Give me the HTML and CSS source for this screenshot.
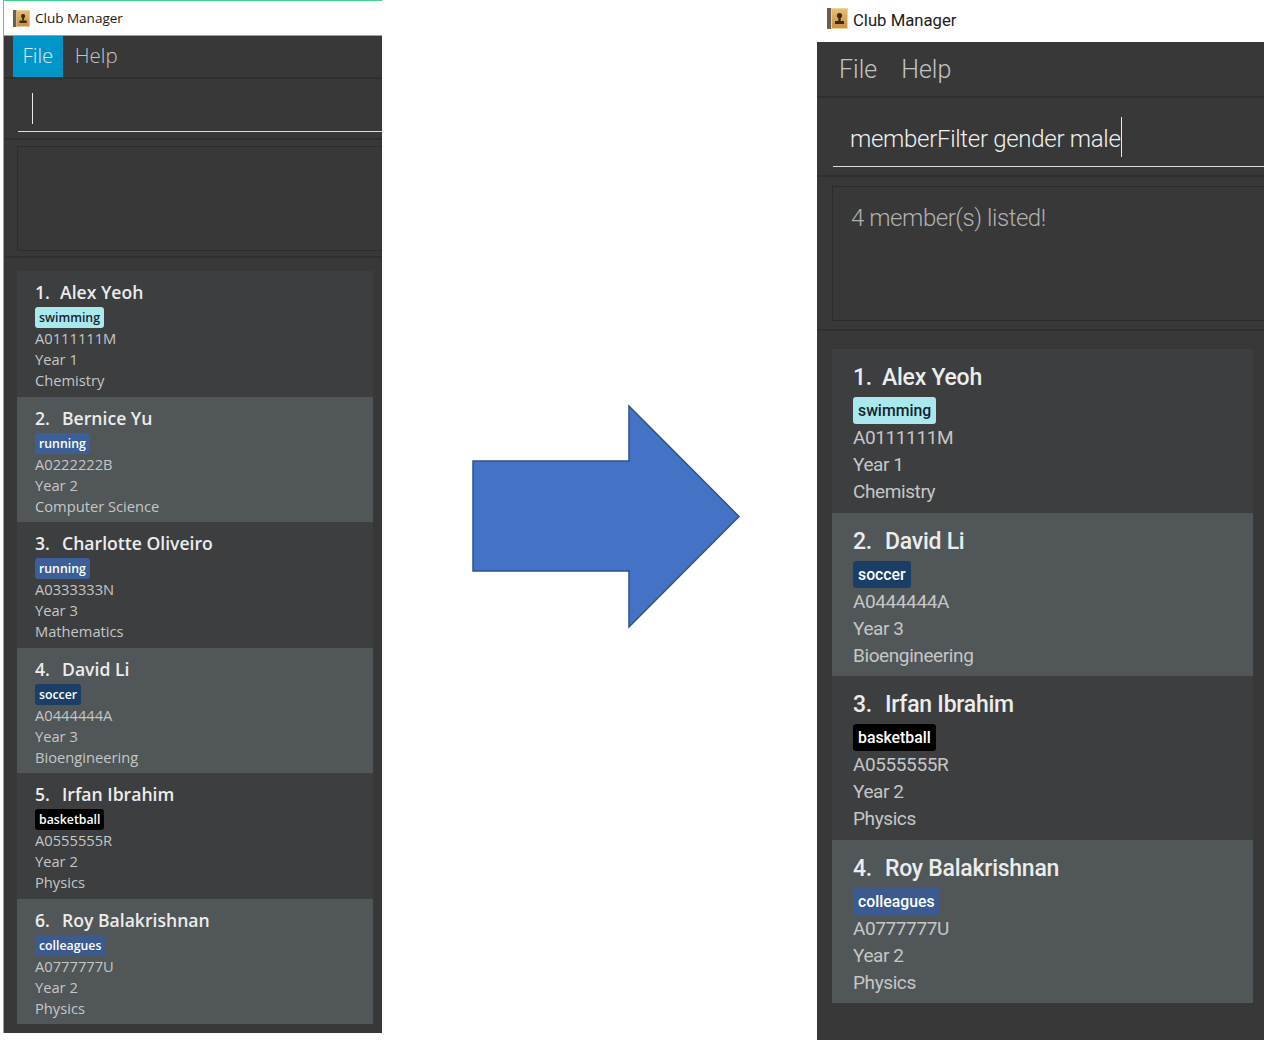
FILE: index.html
```html
<!DOCTYPE html>
<html lang="en">
<head>
    <meta charset="UTF-8">
    <meta name="viewport" content="width=device-width, initial-scale=1.0">
    <title>Club Manager</title>
    <link rel="stylesheet" href="styles.css">
</head>
<body>

<div class="window window-before">
    <div class="titlebar">
        <svg class="app-icon" viewBox="0 0 21 21"><defs><linearGradient id="cover" x1="0" y1="0" x2="0" y2="1"><stop offset="0" stop-color="#e9bd72"/><stop offset="1" stop-color="#c98f3f"/></linearGradient></defs><rect width="21" height="21" fill="#f0d39c"/><rect width="4" height="21" fill="#6b5f50"/><rect x="5" y="1" width="15" height="19" fill="url(#cover)"/><circle cx="12.5" cy="7.5" r="2.6" fill="#3b2a17"/><rect x="11.3" y="9" width="2.4" height="4" fill="#3b2a17"/><rect x="8" y="13" width="9" height="3" fill="#3b2a17"/></svg>
        <span>Club Manager</span>
    </div>
    <div class="menubar">
        <span class="menu-item active">File</span>
        <span class="menu-item">Help</span>
    </div>
    <div class="command-bar">
        <div class="command-input"><span class="caret"></span></div>
    </div>
    <div class="result-bar">
        <div class="result-box"></div>
    </div>
    <div class="member-list">
        <div class="card">
            <div class="name"><span class="index">1.</span>Alex Yeoh</div>
            <div class="tags"><span class="tag tag-swimming">swimming</span></div>
            <div class="line">A0111111M</div>
            <div class="line">Year 1</div>
            <div class="line">Chemistry</div>
        </div>
        <div class="card even">
            <div class="name"><span class="index">2.</span>Bernice Yu</div>
            <div class="tags"><span class="tag tag-running">running</span></div>
            <div class="line">A0222222B</div>
            <div class="line">Year 2</div>
            <div class="line">Computer Science</div>
        </div>
        <div class="card">
            <div class="name"><span class="index">3.</span>Charlotte Oliveiro</div>
            <div class="tags"><span class="tag tag-running">running</span></div>
            <div class="line">A0333333N</div>
            <div class="line">Year 3</div>
            <div class="line">Mathematics</div>
        </div>
        <div class="card even">
            <div class="name"><span class="index">4.</span>David Li</div>
            <div class="tags"><span class="tag tag-soccer">soccer</span></div>
            <div class="line">A0444444A</div>
            <div class="line">Year 3</div>
            <div class="line">Bioengineering</div>
        </div>
        <div class="card">
            <div class="name"><span class="index">5.</span>Irfan Ibrahim</div>
            <div class="tags"><span class="tag tag-basketball">basketball</span></div>
            <div class="line">A0555555R</div>
            <div class="line">Year 2</div>
            <div class="line">Physics</div>
        </div>
        <div class="card even">
            <div class="name"><span class="index">6.</span>Roy Balakrishnan</div>
            <div class="tags"><span class="tag tag-colleagues">colleagues</span></div>
            <div class="line">A0777777U</div>
            <div class="line">Year 2</div>
            <div class="line">Physics</div>
        </div>
    </div>
</div>

<div class="arrow-area">
    <svg class="arrow" viewBox="0 0 270 226"><polygon points="1,57 157,57 157,2 267,112.5 157,223 157,167 1,167" fill="#4472c4" stroke="#2f528f" stroke-width="1.5"/></svg>
</div>

<div class="window window-after">
    <div class="titlebar">
        <svg class="app-icon" viewBox="0 0 21 21"><rect width="21" height="21" fill="#f0d39c"/><rect width="4" height="21" fill="#6b5f50"/><rect x="5" y="1" width="15" height="19" fill="url(#cover)"/><circle cx="12.5" cy="7.5" r="2.6" fill="#3b2a17"/><rect x="11.3" y="9" width="2.4" height="4" fill="#3b2a17"/><rect x="8" y="13" width="9" height="3" fill="#3b2a17"/></svg>
        <span class="title-text">Club Manager</span>
    </div>
    <div class="menubar">
        <span class="menu-item">File</span>
        <span class="menu-item">Help</span>
    </div>
    <div class="command-bar">
        <div class="command-input"><span class="command-text">memberFilter gender male</span><span class="caret"></span></div>
    </div>
    <div class="result-bar">
        <div class="result-box">4 member(s) listed!</div>
    </div>
    <div class="member-list">
        <div class="card">
            <div class="name"><span class="index">1.</span>Alex Yeoh</div>
            <div class="tags"><span class="tag tag-swimming">swimming</span></div>
            <div class="line">A0111111M</div>
            <div class="line">Year 1</div>
            <div class="line">Chemistry</div>
        </div>
        <div class="card even">
            <div class="name"><span class="index">2.</span>David Li</div>
            <div class="tags"><span class="tag tag-soccer">soccer</span></div>
            <div class="line">A0444444A</div>
            <div class="line">Year 3</div>
            <div class="line">Bioengineering</div>
        </div>
        <div class="card">
            <div class="name"><span class="index">3.</span>Irfan Ibrahim</div>
            <div class="tags"><span class="tag tag-basketball">basketball</span></div>
            <div class="line">A0555555R</div>
            <div class="line">Year 2</div>
            <div class="line">Physics</div>
        </div>
        <div class="card even">
            <div class="name"><span class="index">4.</span>Roy Balakrishnan</div>
            <div class="tags"><span class="tag tag-colleagues">colleagues</span></div>
            <div class="line">A0777777U</div>
            <div class="line">Year 2</div>
            <div class="line">Physics</div>
        </div>
    </div>
</div>

</body>
</html>
```

FILE: styles.css
```css
html, body {
    height: 100%;
}
body {
    display: flex;
    align-items: flex-start;
    margin: 0;
    overflow: hidden;
    background-color: #ffffff;
    font-family: "Open Sans", "Noto Sans", sans-serif;
    color: #333;
}
.window {
    flex: none;
    display: flex;
    flex-direction: column;
    overflow: hidden;
    box-sizing: border-box;
}
.titlebar {
    flex: none;
    display: flex;
    align-items: center;
    box-sizing: border-box;
    color: #1a1a1a;
}
.menubar {
    flex: none;
    display: flex;
    box-sizing: border-box;
    background-color: #383838;
    border-bottom: 2px solid #2f2f2f;
}
.menu-item {
    display: flex;
    align-items: center;
    color: #c4c4c4;
}
.menu-item.active {
    background-color: #0095c9;
    color: #d8eef6;
}
.command-bar,
.result-bar {
    flex: none;
    box-sizing: border-box;
    background-color: #383838;
    border-bottom: 2px solid #2f2f2f;
}
.command-input {
    display: flex;
    align-items: flex-end;
    box-sizing: border-box;
    border-bottom: 1px solid #dcdcdc;
    color: #f0f0f0;
}
.caret {
    flex: none;
    width: 1px;
    background-color: #e8e8e8;
}
.result-box {
    box-sizing: border-box;
    border: 1px solid #2c2c2c;
    border-right: none;
    color: #b0b0b0;
}
.member-list {
    flex: 1;
    background-color: #383838;
}
.card {
    box-sizing: border-box;
    background-color: #3c3e3f;
}
.card.even {
    background-color: #515658;
}
.name {
    font-weight: 600;
    color: #ececec;
    white-space: nowrap;
}
.index {
    display: inline-block;
}
.tags {
    display: flex;
}
.tag {
    display: block;
    font-weight: 600;
    color: #ffffff;
    border-radius: 3px;
}
.tag-swimming {
    background-color: #a9e9ed;
    color: #14232b;
}
.tag-running {
    background-color: #3b5f96;
}
.tag-soccer {
    background-color: #1a3e66;
}
.tag-basketball {
    background-color: #000000;
}
.tag-colleagues {
    background-color: #3b5a8f;
}
.line {
    color: #c6c6c6;
    white-space: nowrap;
}
.arrow-area {
    flex: 1;
    display: flex;
    align-items: center;
    height: 100%;
    padding-left: 90px;
    padding-bottom: 7px;
    box-sizing: border-box;
}
.arrow {
    flex: none;
    width: 270px;
    height: 226px;
}

/* left window, smaller scale */
.window-before {
    width: 379px;
    height: 1033px;
    margin-left: 3px;
    border-left: 1px solid #3fd391;
}
.window-before .titlebar {
    height: 36px;
    padding-left: 9px;
    gap: 5px;
    font-size: 13.5px;
    border-top: 1px solid #3fd391;
    border-bottom: 1px solid #a0a0a0;
}
.window-before .app-icon {
    width: 17px;
    height: 17px;
}
.window-before .menubar {
    height: 43px;
    padding-left: 9px;
}
.window-before .menu-item {
    padding: 0 9.5px 3px;
    font-size: 20.5px;
    font-weight: 300;
}
.window-before .menu-item + .menu-item {
    padding-left: 12px;
}
.window-before .command-bar {
    height: 61px;
    padding: 0 0 6px 14px;
}
.window-before .command-input {
    height: 53px;
    padding: 0 0 7px 14px;
}
.window-before .caret {
    height: 31px;
}
.window-before .result-bar {
    height: 118px;
    padding: 6px 0 0 13px;
}
.window-before .result-box {
    height: 105px;
}
.window-before .member-list {
    padding: 13px 9px 0 13px;
}
.window-before .card {
    height: 125.5px;
    padding: 9px 18px 0;
}
.window-before .name {
    height: 22px;
    line-height: 24px;
    font-size: 17.6px;
}
.window-before .index {
    width: 27px;
}
.window-before .card:first-child .index {
    width: 25px;
}
.window-before .tags {
    height: 21px;
    margin-top: 5px;
}
.window-before .tag {
    height: 21px;
    padding: 0 4px;
    line-height: 22px;
    font-size: 12.3px;
}
.window-before .line {
    height: 21px;
    line-height: 21px;
    font-size: 14.7px;
}

/* right window, larger scale and narrower letters */
.window-after {
    width: 447px;
    height: 1040px;
    margin-right: 3px;
    font-family: Roboto, "Open Sans", sans-serif;
}
.window-after .titlebar {
    height: 42px;
    gap: 5px;
    padding-left: 10px;
    font-size: 16.7px;
    background-color: #ffffff;
}
.window-after .title-text {
    margin-bottom: 2px;
}
.window-after .app-icon {
    width: 21px;
    height: 21px;
    margin-bottom: 5px;
}
.window-after .menubar {
    height: 56px;
    padding-left: 22px;
    gap: 24px;
}
.window-after .menu-item {
    font-size: 25px;
    font-weight: 300;
}
.window-after .command-bar {
    height: 79px;
    padding: 0 0 9px 16px;
}
.window-after .command-input {
    height: 69px;
    padding: 0 0 9px 17px;
    font-size: 24px;
    font-weight: 300;
    letter-spacing: -0.3px;
}
.window-after .command-text {
    margin-bottom: -2px;
    line-height: 40px;
}
.window-after .caret {
    height: 40px;
}
.window-after .result-bar {
    height: 154px;
    padding: 9px 0 0 15px;
}
.window-after .result-box {
    height: 135px;
    padding: 17px 0 0 18px;
    font-size: 24px;
    font-weight: 300;
    letter-spacing: -0.45px;
}
.window-after .member-list {
    padding: 18px 11px 0 15px;
}
.window-after .card {
    height: 163.5px;
    padding: 13px 21px 0;
}
.window-after .name {
    height: 28px;
    line-height: 31px;
    font-size: 23px;
    font-weight: 500;
    letter-spacing: -0.25px;
}
.window-after .index {
    width: 32px;
}
.window-after .card:first-child .index {
    width: 29px;
}
.window-after .tags {
    height: 27px;
    margin-top: 7px;
}
.window-after .tag {
    padding: 0 5px;
    line-height: 27px;
    font-size: 15.8px;
    font-weight: 500;
}
.window-after .line {
    height: 27px;
    line-height: 27px;
    font-size: 19px;
    letter-spacing: -0.4px;
}
```
